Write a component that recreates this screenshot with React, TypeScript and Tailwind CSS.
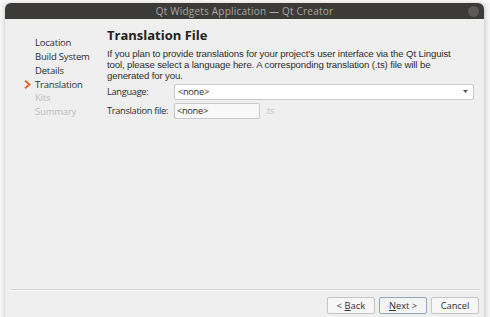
import { useState } from "react";

const STEPS = [
  { label: "Location", state: "done" },
  { label: "Build System", state: "done" },
  { label: "Details", state: "done" },
  { label: "Translation", state: "current" },
  { label: "Kits", state: "todo" },
  { label: "Summary", state: "todo" },
];

export default function App() {
  const [language] = useState("<none>");

  return (
    <div
      className="w-[490px] h-[317px] overflow-hidden bg-[#f4f4f4] pl-[4px] pr-[6px] pt-[3px] relative"
      style={{ fontFamily: '"Open Sans", "Noto Sans", sans-serif' }}
    >
      {/* page behind the dialog */}
      <div className="absolute top-0 left-0 right-0 h-[3px] bg-[#fafafa]" />

      <div className="relative flex flex-col h-[330px] bg-[#efefef] rounded-t-[6px] shadow-[1px_0_4px_rgba(0,0,0,0.18)] border-l border-[#dcdcdc]">
        {/* title bar */}
        <div className="h-[16px] shrink-0 bg-[#3c3b37] rounded-t-[6px] flex items-center justify-center relative">
          <span className="text-[10px] leading-none text-[#a9a8a4] tracking-[0.2px]">
            Qt Widgets Application — Qt Creator
          </span>
          <span className="absolute right-[5px] top-[3px] w-[11px] h-[11px] rounded-full bg-[#5b5a56]" />
        </div>

        <div className="flex flex-1">
          {/* sidebar */}
          <div className="w-[102px] shrink-0 pt-[17px] pl-[19px]">
            {STEPS.map(s => (
              <div key={s.label} className="flex items-center h-[13.8px]">
                <span className="w-[11px] flex items-center">
                  {s.state === "current" && (
                    <svg width="7" height="9" viewBox="0 0 7 9">
                      <path d="M1 0.8 L5.5 4.5 L1 8.2" fill="none" stroke="#e0652a" strokeWidth="1.8" />
                    </svg>
                  )}
                </span>
                <span
                  className={`text-[9.5px] leading-none tracking-[-0.2px] ${
                    s.state === "todo" ? "text-[#bdbdbd]" : "text-[#2e2e2e]"
                  }`}
                >
                  {s.label}
                </span>
              </div>
            ))}
          </div>

          {/* content */}
          <div className="flex-1 pt-[7px] pr-[12px] text-[#2e2e2e] text-[9.3px] tracking-[-0.33px]">
            <h1 className="text-[13px] font-bold leading-[18px] text-[#222] tracking-normal">Translation File</h1>
            <p
              className="mt-[5px] text-[9.6px] leading-[10.8px] tracking-[-0.12px] whitespace-nowrap"
              style={{ fontFamily: '"Liberation Sans", Arial, sans-serif' }}
            >
              If you plan to provide translations for your project's user interface via the Qt Linguist
              <br />
              tool, please select a language here. A corresponding translation (.ts) file will be
              <br />
              generated for you.
            </p>

            <div className="mt-[2px] flex items-center h-[17px]">
              <span className="w-[67px]">Language:</span>
              <div className="flex-1 h-[16px] bg-white border border-[#c9c9c9] rounded-[2px] flex items-center justify-between pl-[3px] pr-[5px] mr-[-2px]">
                <span className="leading-none">{language}</span>
                <svg width="5" height="3" viewBox="0 0 5 3">
                  <path d="M0 0 H5 L2.5 3 Z" fill="#555" />
                </svg>
              </div>
            </div>

            <div className="mt-[2px] flex items-center h-[17px]">
              <span className="w-[67px]">Translation file:</span>
              <div className="w-[86px] h-[16px] bg-[#f8f8f8] border border-[#c9c9c9] rounded-[2px] flex items-center pl-[2px]">
                <span className="leading-none">&lt;none&gt;</span>
              </div>
              <span className="ml-[5px] text-[#c2c2c2]">.ts</span>
            </div>
          </div>
        </div>

        {/* footer */}
        <div className="absolute left-[6px] right-[4px] top-[286px] border-t border-[#d4d4d4] border-b-white border-b" />
        <div className="absolute top-[294px] right-[5px] flex gap-[4px]">
          <button className="w-[48px] h-[17px] bg-[#f7f7f7] border border-[#c4c4c4] rounded-[2px] text-[9.3px] leading-none text-[#2e2e2e]">
            &lt; <span className="underline">B</span>ack
          </button>
          <button className="w-[48px] h-[17px] bg-[#f2f4f6] border border-[#8fa6be] rounded-[2px] text-[9.3px] leading-none text-[#2e2e2e]">
            <span className="underline">N</span>ext &gt;
          </button>
          <button className="w-[48px] h-[17px] bg-[#f7f7f7] border border-[#c4c4c4] rounded-[2px] text-[9.3px] leading-none text-[#2e2e2e]">
            Cancel
          </button>
        </div>
      </div>
    </div>
  );
}
